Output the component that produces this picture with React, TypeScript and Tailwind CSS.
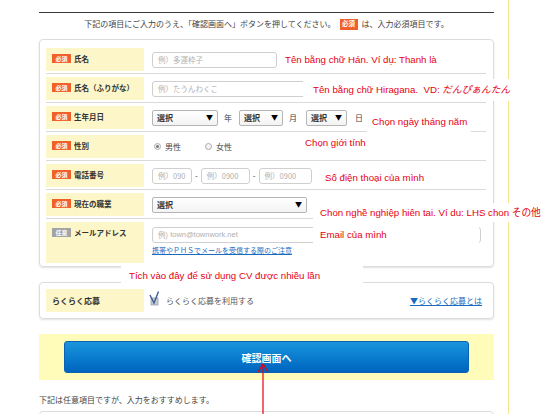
const jp = { fontFamily: '"Noto Sans CJK JP", sans-serif' };
const vi = { fontFamily: '"Liberation Sans", Arial, "Noto Sans CJK JP", sans-serif' };

function Badge({ optional }: { optional?: boolean }) {
  return (
    <span
      className={`flex h-[9px] w-[19px] shrink-0 items-center justify-center text-[6px] font-bold leading-none text-white ${
        optional ? 'bg-[#a3a3a3]' : 'bg-[#f0602a]'
      }`}
    >
      {optional ? '任意' : '必須'}
    </span>
  );
}

function Label({ text, optional, tall }: { text: string; optional?: boolean; tall?: boolean }) {
  return (
    <div
      className={`flex w-[98px] shrink-0 items-start gap-[3px] bg-[#fdf6c9] pl-[6px] pt-[6px] ${
        tall ? 'h-[41px]' : 'h-[23px]'
      }`}
    >
      <Badge optional={optional} />
      <span className="whitespace-nowrap text-[7.5px] font-bold leading-[9px] text-[#333]">{text}</span>
    </div>
  );
}

function Row({ children, last }: { children: React.ReactNode; last?: boolean }) {
  return (
    <div className={`flex pt-[3px] ${last ? '' : 'border-b border-[#dadada] pb-[2px]'}`}>{children}</div>
  );
}

function TextBox({ w, ph }: { w: string; ph: string }) {
  return (
    <div
      className={`${w} flex h-[16px] items-center rounded-[3px] border border-[#cfcfcf] bg-white pl-[5px] text-[7.5px] text-[#b0b0b0]`}
    >
      {ph}
    </div>
  );
}

function Select({ w }: { w: string }) {
  return (
    <div
      className={`${w} flex h-[16px] items-center justify-between rounded-[2px] border border-[#b5b5b5] bg-gradient-to-b from-white to-[#f3f3f3] pl-[4px] pr-[4px] text-[8px] font-bold text-[#333]`}
    >
      <span>選択</span>
      <span className="text-[7px] text-black">▼</span>
    </div>
  );
}

function Radio({ checked }: { checked?: boolean }) {
  return (
    <span className="flex h-[7px] w-[7px] items-center justify-center rounded-full border border-[#aaa] bg-[#f4f4f4]">
      {checked && <span className="h-[3px] w-[3px] rounded-full bg-[#777]" />}
    </span>
  );
}

function Note({ className, children }: { className: string; children: React.ReactNode }) {
  return (
    <div
      className={`absolute flex items-center whitespace-nowrap bg-white text-[9.7px] leading-none text-[#e60012] ${className}`}
      style={vi}
    >
      {children}
    </div>
  );
}

export default function App() {
  return (
    <div className="relative h-[414px] w-[547px] overflow-hidden bg-white" style={jp}>
      <div className="h-full w-[509px] border-r border-[#f4e58c] pl-[39px] pr-[14px] pt-[12px]">
        <div className="border-t border-[#3a3a3a]" />
        <div className="flex h-[22px] items-center justify-center gap-[4px] text-[8px] text-[#444]">
          <span>下記の項目にご入力のうえ、「確認画面へ」ボタンを押してください。</span>
          <span className="flex h-[11px] w-[18px] items-center justify-center bg-[#f0602a] text-[6.5px] font-bold text-white">
            必須
          </span>
          <span>は、入力必須項目です。</span>
        </div>

        <div className="mt-[4px] rounded-[4px] border border-[#dcdcdc] pb-[3px] pl-[6px] pr-[7px] pt-[5px] shadow-[0_1px_2px_rgba(0,0,0,0.12)]">
          <Row>
            <Label text="氏名" />
            <div className="ml-[8px] flex h-[23px] items-center">
              <TextBox w="w-[125px]" ph="例）多運枠子" />
            </div>
          </Row>
          <Row>
            <Label text="氏名（ふりがな）" />
            <div className="ml-[8px] flex h-[23px] items-center">
              <TextBox w="w-[170px]" ph="例）たうんわくこ" />
            </div>
          </Row>
          <Row>
            <Label text="生年月日" />
            <div className="ml-[8px] flex h-[23px] items-center text-[8px] text-[#444]">
              <Select w="w-[66px]" />
              <span className="ml-[6px] mr-[7px]">年</span>
              <Select w="w-[44px]" />
              <span className="ml-[6px] mr-[9px]">月</span>
              <Select w="w-[41px]" />
              <span className="ml-[8px]">日</span>
            </div>
          </Row>
          <Row>
            <Label text="性別" />
            <div className="ml-[10px] flex h-[23px] items-center text-[8px] text-[#444]">
              <Radio checked />
              <span className="ml-[4px]">男性</span>
              <span className="ml-[24px]">
                <Radio />
              </span>
              <span className="ml-[4px]">女性</span>
            </div>
          </Row>
          <Row>
            <Label text="電話番号" />
            <div className="ml-[8px] flex h-[23px] items-center text-[8px] text-[#444]">
              <TextBox w="w-[40px]" ph="例）090" />
              <span className="mx-[3px]">-</span>
              <TextBox w="w-[49px]" ph="例）0900" />
              <span className="mx-[3px]">-</span>
              <TextBox w="w-[53px]" ph="例）0900" />
            </div>
          </Row>
          <Row>
            <Label text="現在の職業" />
            <div className="ml-[8px] flex h-[23px] items-center">
              <Select w="w-[155px]" />
            </div>
          </Row>
          <Row last>
            <Label text="メールアドレス" optional tall />
            <div className="ml-[8px] flex flex-col pt-[5px]">
              <div
                className="flex h-[16px] w-[329px] items-center rounded-[3px] border border-[#cfcfcf] pl-[5px] text-[7.5px] text-[#b0b0b0]"
                style={vi}
              >
                <span style={jp}>例)</span>&nbsp;town@townwork.net
              </div>
              <span className="mt-[3px] text-[7px] leading-[9px] text-[#1a6bc0] underline">
                携帯やＰＨＳでメールを受信する際のご注意
              </span>
            </div>
          </Row>
        </div>

        <div className="mt-[15px] flex items-center rounded-[4px] border border-[#dcdcdc] py-[6px] pl-[6px] pr-[11px] shadow-[0_1px_2px_rgba(0,0,0,0.12)]">
          <div className="flex h-[23px] w-[98px] items-center bg-[#fdf6c9] pl-[6px] text-[8px] font-bold text-[#333]">
            らくらく応募
          </div>
          <svg width="11" height="15" viewBox="0 0 11 15" className="ml-[5px] mt-[-4px]">
            <rect x="2" y="7" width="7" height="7" fill="#c7cbd3" stroke="#9aa1ad" strokeWidth="0.8" />
            <path d="M1 4 L5 12 L9.5 0.5" fill="none" stroke="#3d5f93" strokeWidth="1.4" />
          </svg>
          <span className="ml-[6px] text-[8px] text-[#555]">らくらく応募を利用する</span>
          <span className="ml-auto text-[8px] text-[#1a6bc0] underline">▼らくらく応募とは</span>
        </div>

        <div className="mt-[15px] h-[46px] bg-[#fffbb8] px-[25px] pt-[7px]">
          <div className="flex h-[32px] items-center justify-center rounded-[3px] border border-[#0a62b4] bg-gradient-to-b from-[#1b95dc] to-[#0064bf] text-[10px] font-bold text-white">
            確認画面へ
          </div>
        </div>

        <div className="mt-[14px] h-[12px] text-[8px] leading-[12px] text-[#444]">
          下記は任意項目ですが、入力をおすすめします。
        </div>
        <div className="mt-[5px] h-[20px] rounded-[4px] border border-[#dcdcdc]" />
      </div>

      <Note className="left-[285px] top-[54px] h-[12px]">Tên bằng chữ Hán. Ví dụ: Thanh là</Note>
      <Note className="left-[303px] top-[79px] h-[22px] pl-[10px] pr-[6px]">
        Tên bằng chữ Hiragana.&nbsp; VD:&nbsp;
        <span style={jp} className="italic">
          だんぴぁんたん
        </span>
      </Note>
      <Note className="left-[367px] top-[112px] h-[20px] pl-[5px] pr-[4px]">Chọn ngày tháng năm</Note>
      <Note className="left-[296px] top-[134px] h-[18px] w-[150px] pl-[9px]">Chọn giới tính</Note>
      <Note className="left-[319px] top-[171px] h-[14px] pl-[6px]">Số điện thoại của mình</Note>
      <Note className="left-[313px] top-[203px] h-[19px] w-[234px] pl-[7px]">
        Chon nghề nghiệp hiên tai. Ví du: LHS chon&nbsp;<span style={jp}>その他</span>
      </Note>
      <Note className="left-[313px] top-[224px] h-[21px] w-[166px] pl-[7px]">Email của mình</Note>
      <Note className="left-[121px] top-[263px] h-[26px] w-[242px] pl-[8px]">
        Tích vào đây để sử dụng CV được nhiều lần
      </Note>

      <svg className="absolute left-[256px] top-[362px]" width="14" height="52" viewBox="0 0 14 52">
        <path d="M7 2 L7 52 M2 10 L7 2 L12 10" fill="none" stroke="#e60012" strokeWidth="1.2" />
      </svg>
    </div>
  );
}
